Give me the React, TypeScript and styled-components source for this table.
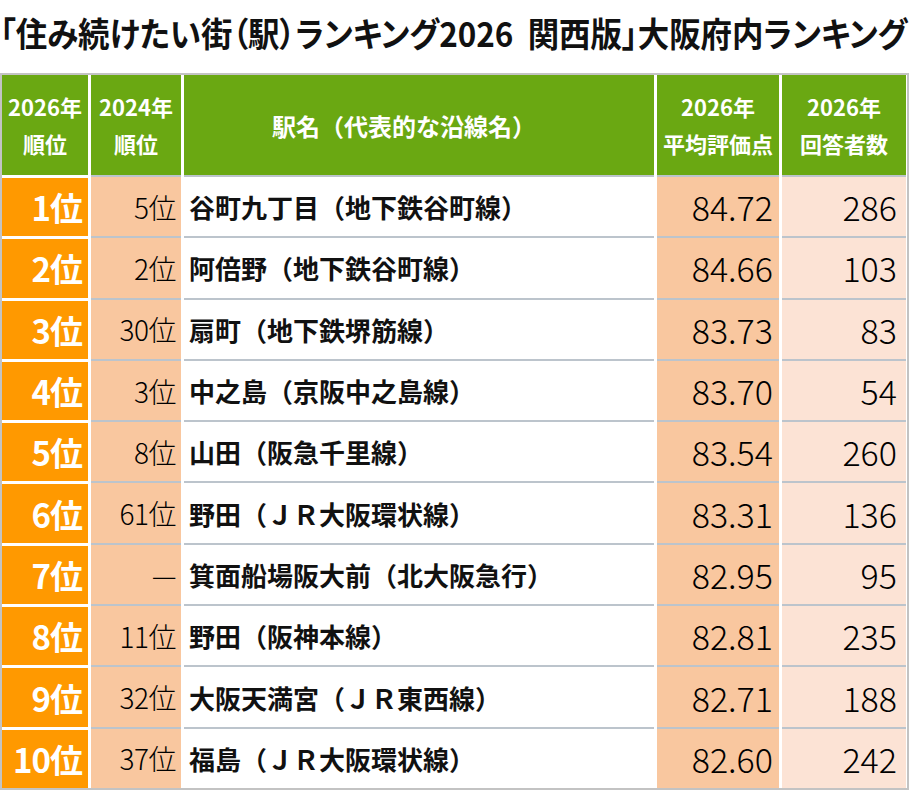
import styled, { createGlobalStyle } from "styled-components";

interface RankRow {
    rank: number,
    prev: string,
    name: string,
    score: string,
    count: number
}

const rows: RankRow[] = [
    { rank: 1, prev: "5位", name: "谷町九丁目（地下鉄谷町線）", score: "84.72", count: 286 },
    { rank: 2, prev: "2位", name: "阿倍野（地下鉄谷町線）", score: "84.66", count: 103 },
    { rank: 3, prev: "30位", name: "扇町（地下鉄堺筋線）", score: "83.73", count: 83 },
    { rank: 4, prev: "3位", name: "中之島（京阪中之島線）", score: "83.70", count: 54 },
    { rank: 5, prev: "8位", name: "山田（阪急千里線）", score: "83.54", count: 260 },
    { rank: 6, prev: "61位", name: "野田（ＪＲ大阪環状線）", score: "83.31", count: 136 },
    { rank: 7, prev: "—", name: "箕面船場阪大前（北大阪急行）", score: "82.95", count: 95 },
    { rank: 8, prev: "11位", name: "野田（阪神本線）", score: "82.81", count: 235 },
    { rank: 9, prev: "32位", name: "大阪天満宮（ＪＲ東西線）", score: "82.71", count: 188 },
    { rank: 10, prev: "37位", name: "福島（ＪＲ大阪環状線）", score: "82.60", count: 242 },
];

const GlobalStyle = createGlobalStyle`
    body {
        margin: 0;
        background: #fff;
        font-family: "Noto Sans CJK JP", "Noto Sans", sans-serif;
    }
`;

const Page = styled.div`
    width: 909px;
    height: 790px;
    overflow: hidden;
    background: #fff;
`;

const TitleBar = styled.div`
    height: 73px;
    padding-bottom: 8px;
    box-sizing: border-box;
    display: flex;
    align-items: center;
    overflow: hidden;
`;

const Title = styled.h1`
    margin: 0;
    font-size: 34px;
    font-weight: 700;
    color: #111;
    white-space: pre;
    font-feature-settings: "palt";
    transform: scaleX(0.925);
    transform-origin: left center;
`;

const Table = styled.div`
    border: 2px solid #c3c3c3;
    background: #fff;
`;

const cols = "86px 90px 470px 122px 124px";

const HeadRow = styled.div`
    display: grid;
    grid-template-columns: ${cols};
    column-gap: 3px;
    height: 100px;
`;

const HeadCell = styled.div<{ $big?: boolean }>`
    background: #6aa812;
    color: #fff;
    font-weight: 700;
    font-size: ${(p) => (p.$big ? "24px" : "22px")};
    line-height: 37px;
    display: flex;
    flex-direction: column;
    align-items: center;
    justify-content: center;
    text-align: center;
    padding-right: ${(p) => (p.$big ? "30px" : "0")};
`;

const BodyRow = styled.div`
    display: grid;
    grid-template-columns: ${cols};
    column-gap: 3px;
    height: 61.3px;
`;

const Cell = styled.div<{ $bg: string, $pad?: number }>`
    background: ${(p) => p.$bg};
    border-top: 2px solid #bcc4cc;
    display: flex;
    align-items: center;
    justify-content: flex-end;
    padding-right: ${(p) => p.$pad ?? 5}px;
    color: #111;
`;

const RankCell = styled.div`
    background: #ff9900;
    margin-top: 3px;
    display: flex;
    align-items: center;
    justify-content: flex-end;
    padding-right: 6px;
    color: #fff;
    font-size: 33px;
    font-weight: 700;
    letter-spacing: -1px;
`;

const PrevText = styled.span`
    font-size: 28px;
    font-weight: 300;
    letter-spacing: -0.5px;
    color: #000;
`;

const NameCell = styled.div`
    background: #fff;
    border-top: 2px solid #bcc4cc;
    display: flex;
    align-items: center;
    padding-left: 5px;
    font-size: 26px;
    font-weight: 700;
    color: #111;
`;

const Num = styled.span`
    font-size: 34px;
    font-weight: 300;
    color: #000;
`;

export default function App() {
    return (
        <Page>
            <GlobalStyle />
            <TitleBar>
                <Title>「住み続けたい街（駅）ランキング2026  関西版」大阪府内ランキング</Title>
            </TitleBar>
            <Table>
                <HeadRow>
                    <HeadCell><span>2026年</span><span>順位</span></HeadCell>
                    <HeadCell><span>2024年</span><span>順位</span></HeadCell>
                    <HeadCell $big>駅名（代表的な沿線名）</HeadCell>
                    <HeadCell><span>2026年</span><span>平均評価点</span></HeadCell>
                    <HeadCell><span>2026年</span><span>回答者数</span></HeadCell>
                </HeadRow>
                {rows.map((r) => (
                    <BodyRow key={r.rank}>
                        <RankCell>{r.rank}位</RankCell>
                        <Cell $bg="#f9c79f"><PrevText>{r.prev}</PrevText></Cell>
                        <NameCell>{r.name}</NameCell>
                        <Cell $bg="#f9c79f" $pad={6}><Num>{r.score}</Num></Cell>
                        <Cell $bg="#fce3d5" $pad={9}><Num>{r.count}</Num></Cell>
                    </BodyRow>
                ))}
            </Table>
        </Page>
    );
}
